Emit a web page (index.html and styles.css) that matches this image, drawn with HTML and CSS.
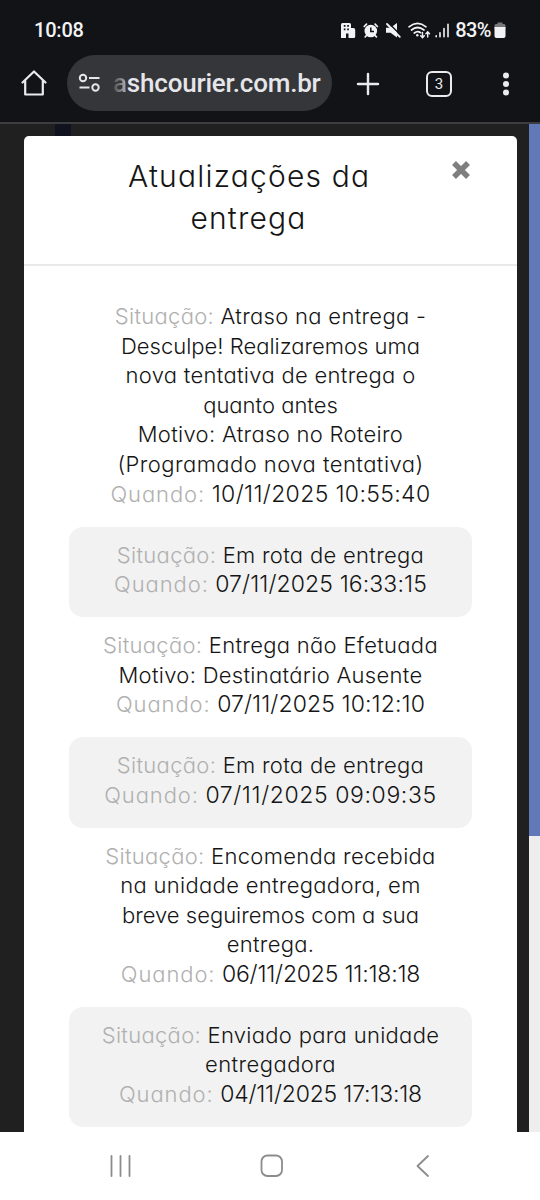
FILE: index.html
```html
<!DOCTYPE html>
<html lang="pt-BR">
<head>
    <meta charset="UTF-8">
    <meta name="viewport" content="width=device-width, initial-scale=1.0">
    <title>Atualizações da entrega</title>
    <link rel="stylesheet" href="styles.css">
</head>
<body>
    <div class="phone">
        <div class="status-bar">
            <span class="clock">10:08</span>
            <svg class="status-icons" width="110" height="24" viewBox="340 18 110 24">
                <!-- building -->
                <path fill="#f3f3f5" fill-rule="evenodd" d="M342.500 23h7q1.500 0 1.500 1.500v3.500h2.500q1.700 0 1.700 1.700v6.800q0 1.500-1.500 1.500h-5.200v-4.500h-2.500v4.500h-5v-13.500q0-1.500 1.500-1.500zM343.800 25v1.700h1.700v-1.700zM347.200 25v1.700h1.700v-1.700zM343.800 28.500v1.700h1.700v-1.700zM347.200 28.500v1.700h1.700v-1.700z"/>
                <!-- alarm -->
                <circle cx="370.800" cy="31" r="6.300" fill="#f3f3f5"/>
                <path fill="none" stroke="#f3f3f5" stroke-width="1.700" stroke-linecap="round" d="M364.200 26.500l2.300-2.300M377.400 26.500l-2.300-2.300M366.500 35.500l-1.300 1.300M375.100 35.500l1.300 1.300"/>
                <path fill="none" stroke="#121317" stroke-width="1.500" d="M370.800 27.500v4h3.200"/>
                <!-- muted speaker -->
                <path fill="#f3f3f5" d="M386 27.800h4.500l6.500-4.800v14.500l-6.500-4.800h-4.500z"/>
                <path stroke="#121317" stroke-width="1.500" d="M388.300 22.800l13 13"/>
                <path stroke="#f3f3f5" stroke-width="1.900" stroke-linecap="round" d="M387 24l12.800 12.800"/>
                <!-- wifi -->
                <g fill="none" stroke="#f3f3f5" stroke-width="1.700" stroke-linecap="round">
                    <path d="M409 26.800q8.500-7 17 0M411.500 30q6-5 12.500 0M414.300 33q3.200-2.500 6.300-.3"/>
                    <path stroke-width="1.400" d="M422.500 32.500v5M420.700 35.800l1.800 1.900 1.800-1.900M427.700 37v-5M425.900 33.700l1.800-1.900 1.800 1.900"/>
                </g>
                <circle cx="417.300" cy="35.300" r="1.200" fill="#f3f3f5"/>
                <!-- signal -->
                <path stroke="#f3f3f5" stroke-width="1.600" stroke-linecap="round" d="M436.200 35.800v1M440 32.800v4M444 28.500v8.300M448 24.300v12.500"/>
            </svg>
            <span class="battery-level">83%</span>
            <svg class="battery" width="12" height="18" viewBox="0 0 12 18">
                <path fill="#77777a" d="M3.500 1.500h5v1.500h1.500q1.500 0 1.500 1.500v3h-11v-3q0-1.500 1.500-1.500h1.500z"/>
                <path fill="#f3f3f5" d="M.500 6h11v9q0 2-2 2h-7q-2 0-2-2z"/>
            </svg>
        </div>

        <div class="browser-bar">
            <svg class="home" width="28" height="28" viewBox="0 0 28 28" fill="none" stroke="#ebebef" stroke-width="2.200" stroke-linecap="round" stroke-linejoin="round">
                <path d="M2.500 13.500L14 2.500l11.500 11M5.200 11.500v14h17.600v-14"/>
            </svg>
            <div class="address">
                <svg width="24" height="20" viewBox="0 0 24 20" fill="none" stroke="#e6e6ea" stroke-width="2">
                    <circle cx="5" cy="5" r="3.200"/>
                    <path d="M11 5h10.500M1.500 14.500h10"/>
                    <circle cx="17.500" cy="14.500" r="3.200"/>
                </svg>
                <span class="url"><span class="fade">a</span>shcourier.com.br</span>
            </div>
            <svg class="plus" width="24" height="24" viewBox="0 0 24 24" stroke="#ebebef" stroke-width="2.400" stroke-linecap="round">
                <path d="M12 2v20M2 12h20"/>
            </svg>
            <span class="tabs">3</span>
            <svg class="dots" width="8" height="26" viewBox="0 0 8 26" fill="#ebebef">
                <circle cx="4" cy="4.500" r="3"/>
                <circle cx="4" cy="13" r="3"/>
                <circle cx="4" cy="21.500" r="3"/>
            </svg>
        </div>

        <div class="page">
            <div class="modal">
                <div class="modal-header">
                    <h4 class="title">Atualizações da<br>entrega</h4>
                    <svg class="close" width="20" height="20" viewBox="0 0 20 20" stroke="#7f7f7f" stroke-width="5.500">
                        <path d="M3 3l14 14M17 3L3 17"/>
                    </svg>
                </div>
                <div class="modal-body">
                    <div class="item">
                        <div><span class="label">Situação:</span> Atraso na entrega -</div>
                        <div class="tight">Desculpe! Realizaremos uma</div>
                        <div>nova tentativa de entrega o</div>
                        <div class="tight">quanto antes</div>
                        <div>Motivo: Atraso no Roteiro</div>
                        <div class="loose">(Programado nova tentativa)</div>
                        <div><span class="label when">Quando:</span> <span class="date loose">10/11/2025 10:55:40</span></div>
                    </div>
                    <div class="item">
                        <div><span class="label">Situação:</span> Em rota de entrega</div>
                        <div><span class="label when">Quando:</span> <span class="date">07/11/2025 16:33:15</span></div>
                    </div>
                    <div class="item">
                        <div><span class="label">Situação:</span> Entrega não Efetuada</div>
                        <div>Motivo: Destinatário Ausente</div>
                        <div><span class="label when">Quando:</span> <span class="date">07/11/2025 10:12:10</span></div>
                    </div>
                    <div class="item">
                        <div><span class="label">Situação:</span> Em rota de entrega</div>
                        <div><span class="label when">Quando:</span> <span class="date wide">07/11/2025 09:09:35</span></div>
                    </div>
                    <div class="item">
                        <div><span class="label">Situação:</span> Encomenda recebida</div>
                        <div>na unidade entregadora, em</div>
                        <div class="tight">breve seguiremos com a sua</div>
                        <div>entrega.</div>
                        <div><span class="label when">Quando:</span> <span class="date narrow">06/11/2025 11:18:18</span></div>
                    </div>
                    <div class="item">
                        <div><span class="label">Situação:</span> Enviado para unidade</div>
                        <div class="loose">entregadora</div>
                        <div><span class="label when">Quando:</span> <span class="date narrow">04/11/2025 17:13:18</span></div>
                    </div>
                </div>
            </div>
        </div>

        <div class="nav-bar">
            <svg width="24" height="24" viewBox="0 0 24 24" stroke="#8c8c8c" stroke-width="1.800" stroke-linecap="round">
                <path d="M3.500 2v20M12.500 2v20M21.500 2v20"/>
            </svg>
            <svg width="24" height="24" viewBox="0 0 24 24" fill="none" stroke="#8c8c8c" stroke-width="1.800">
                <rect x="1.500" y="1.500" width="20.500" height="20.500" rx="6"/>
            </svg>
            <svg width="24" height="24" viewBox="0 0 24 24" fill="none" stroke="#8c8c8c" stroke-width="1.800" stroke-linecap="round" stroke-linejoin="round">
                <path d="M17 2L6.500 12 17 22"/>
            </svg>
        </div>
    </div>
</body>
</html>
```
FILE: styles.css
```css
body {
    margin: 0;
    background: #fff;
    font-family: Inter, "Liberation Sans", sans-serif;
}
.phone {
    width: 540px;
    height: 1200px;
    display: flex;
    flex-direction: column;
    overflow: hidden;
}
.status-bar {
    box-sizing: border-box;
    height: 55px;
    padding: 5px 34px 0 34px;
    background: #121317;
    display: flex;
    align-items: center;
    color: #f3f3f5;
    font-family: Roboto, sans-serif;
    font-weight: 500;
}
.clock {
    font-size: 20px;
    letter-spacing: -0.2px;
}
.status-icons {
    margin-left: auto;
}
.battery-level {
    margin-left: 5px;
    font-size: 20px;
    letter-spacing: -0.6px;
}
.battery {
    margin-left: 3px;
}
.browser-bar {
    box-sizing: border-box;
    height: 69px;
    padding: 0 30px 11px 20px;
    border-bottom: 2px solid #3d3d41;
    background: #121317;
    display: flex;
    align-items: center;
}
.address {
    box-sizing: border-box;
    width: 265px;
    height: 56px;
    margin-left: 19px;
    padding-left: 11px;
    border-radius: 28px;
    background: #35363a;
    display: flex;
    align-items: center;
}
.url {
    margin-left: 11px;
    color: #e6e6ea;
    font: 500 26px Roboto, sans-serif;
    letter-spacing: -0.2px;
    white-space: nowrap;
}
.fade {
    background: linear-gradient(to right, #4a4b4f, #b5b5ba);
    -webkit-background-clip: text;
    background-clip: text;
    color: transparent;
}
.plus {
    margin: 2px 0 0 24px;
}
.tabs {
    box-sizing: border-box;
    width: 26px;
    height: 26px;
    margin: 2px 0 0 46px;
    border: 2.5px solid #ebebef;
    border-radius: 6px;
    color: #ebebef;
    font: 400 15px/22px Roboto, sans-serif;
    text-align: center;
}
.dots {
    margin: 2px 0 0 auto;
}
.page {
    box-sizing: border-box;
    height: 1008px;
    padding: 12px 23px 0 24px;
    background:
        linear-gradient(#10131f, #10131f) 55px 0 / 16px 12px no-repeat,
        linear-gradient(#6179b8, #6179b8) 529px 0 / 11px 712px no-repeat,
        linear-gradient(#eee, #eee) 529px 712px / 11px 296px no-repeat,
        #202020;
    overflow: hidden;
}
.modal {
    height: 1010px;
    border-radius: 5px 5px 0 0;
    background: #fff;
    color: #151515;
    font-feature-settings: "cv11";
    font-weight: 300;
    text-align: center;
}
.modal-header {
    box-sizing: border-box;
    height: 130px;
    padding: 19px 46px 0 104px;
    border-bottom: 2px solid #e9e9e9;
    display: flex;
    justify-content: space-between;
}
.title {
    width: 241px;
    margin: 0;
    font-size: 30px;
    font-weight: 300;
    line-height: 42px;
    letter-spacing: 1.2px;
    white-space: nowrap;
}
.close {
    margin-top: 5px;
}
.modal-body {
    padding: 22.5px 45px 0;
    font-size: 22px;
    line-height: 29.6px;
    letter-spacing: 0.3px;
    white-space: nowrap;
}
.item {
    padding: 13.6px 0 17.7px;
    border-radius: 14px;
}
.item:nth-child(even) {
    background: #f2f2f2;
}
.label {
    color: #b0b0b0;
}
.when {
    letter-spacing: 0.9px;
}
.tight {
    letter-spacing: 0;
}
.loose {
    letter-spacing: 0.45px;
}
.date {
    font-size: 23px;
    line-height: 1;
    letter-spacing: 0.1px;
}
.date.loose {
    letter-spacing: 0.35px;
}
.date.wide {
    letter-spacing: 0.6px;
}
.date.narrow {
    letter-spacing: -0.2px;
}
.nav-bar {
    height: 68px;
    padding: 0 105px 0 108px;
    display: flex;
    justify-content: space-between;
    align-items: center;
}
```
